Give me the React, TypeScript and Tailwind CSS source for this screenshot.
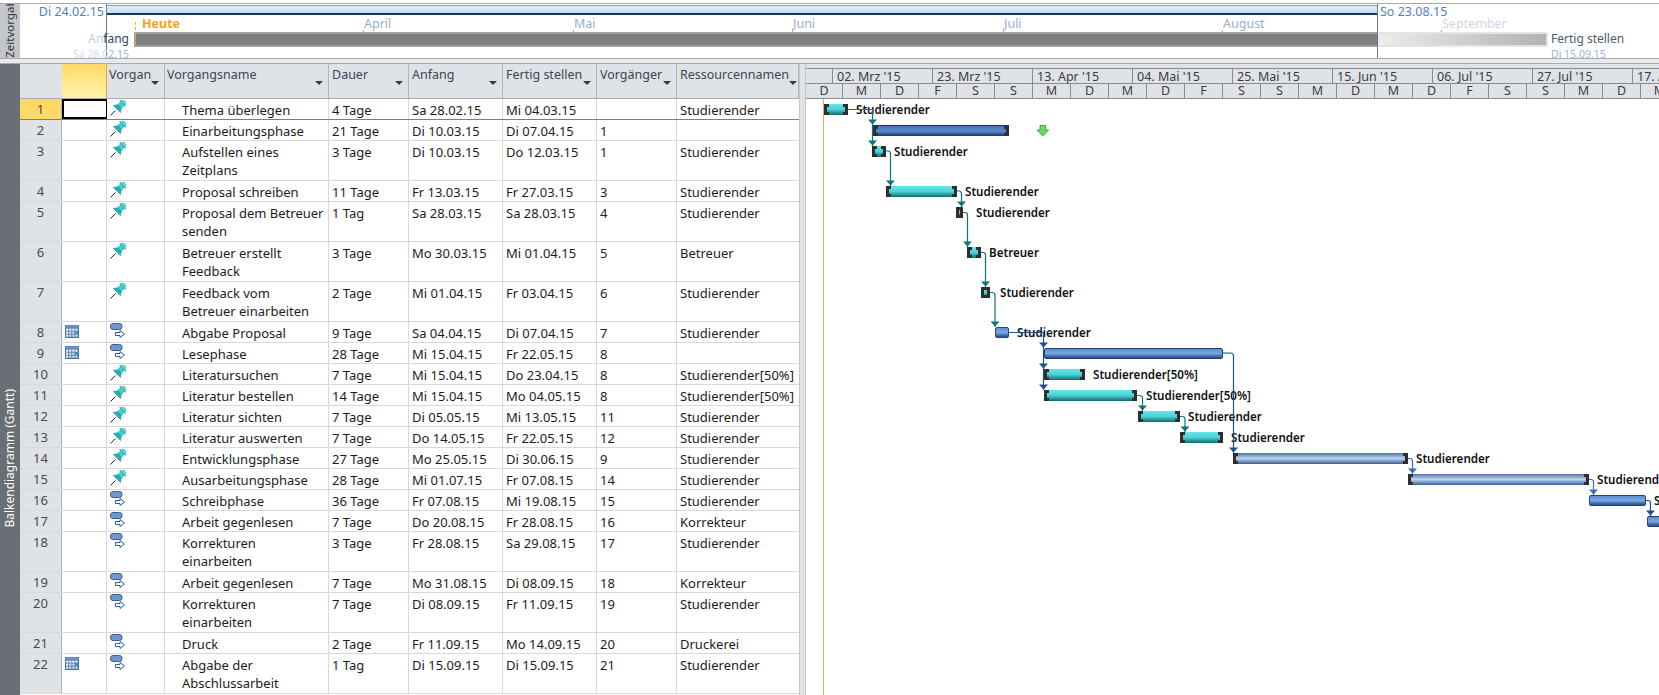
import React from "react";

type Row = {
  id: number;
  h: string;
  cal?: boolean;
  mode: "pin" | "auto";
  name: string;
  dur: string;
  start: string;
  end: string;
  pred: string;
  res: string;
};

const rows: Row[] = [
  { id: 1, h: "h-[21px]", mode: "pin", name: "Thema überlegen", dur: "4 Tage", start: "Sa 28.02.15", end: "Mi 04.03.15", pred: "", res: "Studierender" },
  { id: 2, h: "h-[21px]", mode: "pin", name: "Einarbeitungsphase", dur: "21 Tage", start: "Di 10.03.15", end: "Di 07.04.15", pred: "1", res: "" },
  { id: 3, h: "h-[40px]", mode: "pin", name: "Aufstellen eines\nZeitplans", dur: "3 Tage", start: "Di 10.03.15", end: "Do 12.03.15", pred: "1", res: "Studierender" },
  { id: 4, h: "h-[21px]", mode: "pin", name: "Proposal schreiben", dur: "11 Tage", start: "Fr 13.03.15", end: "Fr 27.03.15", pred: "3", res: "Studierender" },
  { id: 5, h: "h-[40px]", mode: "pin", name: "Proposal dem Betreuer\nsenden", dur: "1 Tag", start: "Sa 28.03.15", end: "Sa 28.03.15", pred: "4", res: "Studierender" },
  { id: 6, h: "h-[40px]", mode: "pin", name: "Betreuer erstellt\nFeedback", dur: "3 Tage", start: "Mo 30.03.15", end: "Mi 01.04.15", pred: "5", res: "Betreuer" },
  { id: 7, h: "h-[40px]", mode: "pin", name: "Feedback vom\nBetreuer einarbeiten", dur: "2 Tage", start: "Mi 01.04.15", end: "Fr 03.04.15", pred: "6", res: "Studierender" },
  { id: 8, h: "h-[21px]", cal: true, mode: "auto", name: "Abgabe Proposal", dur: "9 Tage", start: "Sa 04.04.15", end: "Di 07.04.15", pred: "7", res: "Studierender" },
  { id: 9, h: "h-[21px]", cal: true, mode: "auto", name: "Lesephase", dur: "28 Tage", start: "Mi 15.04.15", end: "Fr 22.05.15", pred: "8", res: "" },
  { id: 10, h: "h-[21px]", mode: "pin", name: "Literatursuchen", dur: "7 Tage", start: "Mi 15.04.15", end: "Do 23.04.15", pred: "8", res: "Studierender[50%]" },
  { id: 11, h: "h-[21px]", mode: "pin", name: "Literatur bestellen", dur: "14 Tage", start: "Mi 15.04.15", end: "Mo 04.05.15", pred: "8", res: "Studierender[50%]" },
  { id: 12, h: "h-[21px]", mode: "pin", name: "Literatur sichten", dur: "7 Tage", start: "Di 05.05.15", end: "Mi 13.05.15", pred: "11", res: "Studierender" },
  { id: 13, h: "h-[21px]", mode: "pin", name: "Literatur auswerten", dur: "7 Tage", start: "Do 14.05.15", end: "Fr 22.05.15", pred: "12", res: "Studierender" },
  { id: 14, h: "h-[21px]", mode: "pin", name: "Entwicklungsphase", dur: "27 Tage", start: "Mo 25.05.15", end: "Di 30.06.15", pred: "9", res: "Studierender" },
  { id: 15, h: "h-[21px]", mode: "pin", name: "Ausarbeitungsphase", dur: "28 Tage", start: "Mi 01.07.15", end: "Fr 07.08.15", pred: "14", res: "Studierender" },
  { id: 16, h: "h-[21px]", mode: "auto", name: "Schreibphase", dur: "36 Tage", start: "Fr 07.08.15", end: "Mi 19.08.15", pred: "15", res: "Studierender" },
  { id: 17, h: "h-[21px]", mode: "auto", name: "Arbeit gegenlesen", dur: "7 Tage", start: "Do 20.08.15", end: "Fr 28.08.15", pred: "16", res: "Korrekteur" },
  { id: 18, h: "h-[40px]", mode: "auto", name: "Korrekturen\neinarbeiten", dur: "3 Tage", start: "Fr 28.08.15", end: "Sa 29.08.15", pred: "17", res: "Studierender" },
  { id: 19, h: "h-[21px]", mode: "auto", name: "Arbeit gegenlesen", dur: "7 Tage", start: "Mo 31.08.15", end: "Di 08.09.15", pred: "18", res: "Korrekteur" },
  { id: 20, h: "h-[40px]", mode: "auto", name: "Korrekturen\neinarbeiten", dur: "7 Tage", start: "Di 08.09.15", end: "Fr 11.09.15", pred: "19", res: "Studierender" },
  { id: 21, h: "h-[21px]", mode: "auto", name: "Druck", dur: "2 Tage", start: "Fr 11.09.15", end: "Mo 14.09.15", pred: "20", res: "Druckerei" },
  { id: 22, h: "h-[40px]", cal: true, mode: "auto", name: "Abgabe der\nAbschlussarbeit", dur: "1 Tag", start: "Di 15.09.15", end: "Di 15.09.15", pred: "21", res: "Studierender" },
];

const columns = [
  { label: "Vorgan", pad: "pl-[2px]" },
  { label: "Vorgangsname", pad: "pl-[2px]" },
  { label: "Dauer", pad: "pl-[3px]" },
  { label: "Anfang", pad: "pl-[3px]" },
  { label: "Fertig stellen", pad: "pl-[3px]" },
  { label: "Vorgänger", pad: "pl-[3px]" },
  { label: "Ressourcennamen", pad: "pl-[3px]" },
];

// bars in page coordinates, the chart body starts at 806/99
const bars = [
  { x: 824, w: 24, y: 104, kind: "manual", label: "Studierender", lx: 856 },
  { x: 873, w: 136, y: 125, kind: "summary", label: "", lx: 0 },
  { x: 872, w: 14, y: 146, kind: "manual", label: "Studierender", lx: 894 },
  { x: 886, w: 71, y: 186, kind: "manual", label: "Studierender", lx: 965 },
  { x: 956, w: 7, y: 207, kind: "manual", label: "Studierender", lx: 976 },
  { x: 967, w: 14, y: 247, kind: "manual", label: "Betreuer", lx: 989 },
  { x: 981, w: 9, y: 287, kind: "manual", label: "Studierender", lx: 1000 },
  { x: 995, w: 14, y: 327, kind: "auto", label: "Studierender", lx: 1017 },
  { x: 1044, w: 179, y: 348, kind: "auto", label: "", lx: 0 },
  { x: 1044, w: 41, y: 369, kind: "manual", label: "Studierender[50%]", lx: 1093 },
  { x: 1044, w: 93, y: 390, kind: "manual", label: "Studierender[50%]", lx: 1146 },
  { x: 1138, w: 42, y: 411, kind: "manual", label: "Studierender", lx: 1188 },
  { x: 1180, w: 43, y: 432, kind: "manual", label: "Studierender", lx: 1231 },
  { x: 1233, w: 175, y: 453, kind: "pale", label: "Studierender", lx: 1416 },
  { x: 1408, w: 181, y: 474, kind: "pale", label: "Studierender", lx: 1597 },
  { x: 1589, w: 57, y: 495, kind: "auto", label: "Studierender", lx: 1654 },
  { x: 1647, w: 40, y: 516, kind: "auto", label: "", lx: 0 },
];

const barStyles: Record<string, string> = {
  manual: "bg-gradient-to-b from-[#5fe8ec] via-[#4fd0d6] to-[#0f6b70]",
  summary: "bg-gradient-to-b from-[#4a74b4] via-[#5b8ad0] to-[#1c3a66] border-t border-[#17365f]",
  auto: "bg-gradient-to-b from-[#5f8fd4] via-[#7aa5e2] to-[#244e8a] border border-[#1f4478] rounded-[2px]",
  pale: "bg-gradient-to-b from-[#4a77b5] via-[#c3d2e8] to-[#345f9c]",
};

const weeks = ["", "02. Mrz '15", "23. Mrz '15", "13. Apr '15", "04. Mai '15", "25. Mai '15", "15. Jun '15", "06. Jul '15", "27. Jul '15", "17. Aug '15"];
const dayNames = ["D", "M", "D", "F", "S", "S", "M"];
const days = Array.from({ length: 23 }, (_, i) => dayNames[i % 7]);

const months = [
  { name: "April", x: 343, color: "text-[#9aaecb]" },
  { name: "Mai", x: 553, color: "text-[#9aaecb]" },
  { name: "Juni", x: 772, color: "text-[#9aaecb]" },
  { name: "Juli", x: 983, color: "text-[#9aaecb]" },
  { name: "August", x: 1202, color: "text-[#9aaecb]" },
  { name: "September", x: 1421, color: "text-[#cfd8e6]" },
];

const teal = "#0c757b";
const navy = "#1f4e8c";
const steel = "#3f6fae";

const links = [
  { d: "M848 109.5H872.5V146", c: teal, tips: [[872.5, 124.5], [872.5, 145.5]] },
  { d: "M886 151H888Q890.5 151 890.5 154V186", c: teal, tips: [[890.5, 185.5]] },
  { d: "M957 191H959Q961.5 191 961.5 194V207", c: teal, tips: [[961.5, 206.5]] },
  { d: "M963 212.5H965Q967.5 212.5 967.5 215V247", c: teal, tips: [[967.5, 246.5]] },
  { d: "M981 252.5H983Q985.5 252.5 985.5 255V287", c: teal, tips: [[985.5, 286.5]] },
  { d: "M990 292.5H992Q995 292.5 995 295V327", c: teal, tips: [[995, 326.5]] },
  { d: "M1009 332.5H1043.5V390", c: navy, tips: [[1043.5, 347.5], [1043.5, 368.5], [1043.5, 389.5]] },
  { d: "M1223 353H1230Q1233.5 353 1233.5 356V453", c: navy, tips: [[1233.5, 452.5]] },
  { d: "M1137 395.5H1139Q1142.5 395.5 1142.5 398V411", c: teal, tips: [[1142.5, 410.5]] },
  { d: "M1180 416.5H1182Q1185 416.5 1185 419V432", c: teal, tips: [[1185, 431.5]] },
  { d: "M1408 458.5H1410Q1412.5 458.5 1412.5 461V474", c: steel, tips: [[1412.5, 473.5]] },
  { d: "M1589 479.5H1591Q1593.5 479.5 1593.5 482V495", c: steel, tips: [[1593.5, 494.5]] },
  { d: "M1646 500.5H1648Q1650.5 500.5 1650.5 503V516", c: navy, tips: [[1650.5, 515.5]] },
];

const PinIcon = () => (
  <svg width="16" height="16" viewBox="0 0 16 16">
    <line x1="0.5" y1="15.5" x2="5.5" y2="10.5" stroke="#2b2b2b" strokeWidth="1" />
    <g transform="rotate(45 8 8)" stroke="#1b8f93" strokeWidth="0.6">
      <rect x="3.5" y="-1.5" width="9" height="3" rx="1" fill="#56dcd8" />
      <rect x="5.5" y="1.5" width="5" height="5" fill="#3fd0cf" />
      <path d="M5.5 6H10.5L13 9.5H3Z" fill="#22b2b4" />
    </g>
  </svg>
);

const AutoIcon = () => (
  <svg width="16" height="16" viewBox="0 0 16 16">
    <rect x="0.5" y="0.5" width="11.5" height="6" rx="2.5" fill="#6f97d2" stroke="#36608f" />
    <path d="M5.5 9.5H10V7.5L14.5 11L10 14.5V12.5H5.5Z" fill="#fff" stroke="#2c5cb0" />
  </svg>
);

const CalendarIcon = () => (
  <svg width="14" height="13" viewBox="0 0 14 13">
    <rect x="0" y="0" width="14" height="13" fill="#4d6f9c" />
    <rect x="0.5" y="0.5" width="13" height="2" fill="#6f9ae0" />
    {[0, 1, 2].map((r) =>
      [0, 1, 2, 3].map((c) => (
        <rect
          key={`${r}-${c}`}
          x={1 + c * 3.1}
          y={3.5 + r * 3}
          width="2.4"
          height="2.3"
          fill={r === 1 && c === 3 ? "#14b4f0" : c === 0 || r === 0 ? "#e6ebf2" : "#cfd6e0"}
        />
      ))
    )}
  </svg>
);

const Timeline = () => (
  <div className="flex h-[55px] mt-[3px] border-t border-[#a9abae] bg-white shrink-0">
    <div className="w-[20px] shrink-0 bg-[#c3c6cb] overflow-hidden flex flex-col justify-end items-center">
      <span className="shrink-0 rotate-180 [writing-mode:vertical-rl] text-[11.5px] leading-[14px] text-[#30343a]">Zeitvorgabe</span>
    </div>
    <div className="relative flex-1 text-[12.5px] leading-[16px] overflow-hidden">
      <div className="absolute left-[86px] top-[1px] w-[1271px] h-[10px] bg-gradient-to-b from-[#e4ecf7] to-[#c8d9f0] border-t border-b-2 border-t-[#8aa0b8] border-b-[#15375c]" />
      <div className="absolute left-[86px] top-0 bottom-0 w-px bg-[#5f7f99]" />
      <div className="absolute left-0 top-[0px] w-[84px] text-right text-[#4f7fbd]">Di 24.02.15</div>
      <div className="absolute left-[1360px] top-[0px] text-[#4f7fbd]">So 23.08.15</div>

      <div className="absolute left-[115px] top-[18px] w-px h-[23px] border-l border-dashed border-[#f5a623] z-10" />
      <div className="absolute left-[122px] top-[12px] font-bold text-[#f5a21e]">Heute</div>
      {months.map((m) => (
        <div key={m.name} className={`absolute top-[12px] ${m.color}`} style={{ left: m.x + 1 }}>
          {m.name}
          <div className="absolute left-[-1px] top-[14px] w-px h-[5px] bg-[#9aaecb]" />
        </div>
      ))}

      <div className="absolute left-[114px] top-[28px] w-[1243px] h-[15px] bg-[#7f7f7f] border-2 border-[#a0a0a0] border-r-0" />
      <div className="absolute left-[1357px] top-[28px] w-[171px] h-[15px] bg-gradient-to-r from-[#ececec] to-[#b2b2b2] border-2 border-[#e4e4e4]" />
      <div className="absolute left-[1357px] top-0 bottom-0 w-px bg-[#5f7f99]" />

      <div className="absolute left-0 top-[27px] w-[109px] text-right text-[12px]">
        <span className="text-[#c6cbd2]">An</span>
        <span className="text-[#34475c]">fang</span>
      </div>
      <div className="absolute left-[1531px] top-[27px] text-[12px] text-[#4c5b6c]">Fertig stellen</div>
      <div className="absolute left-0 top-[42px] w-[109px] text-right text-[10.5px]">
        <span className="text-[#d3dce9]">Sa 28.0</span>
        <span className="text-[#9db4d6]">2.15</span>
      </div>
      <div className="absolute left-[1531px] top-[42px] text-[10.5px] text-[#9db4d6]">Di 15.09.15</div>
    </div>
  </div>
);

const Sheet = () => (
  <div className="w-[779px] shrink-0 flex flex-col">
    <div className="grid grid-cols-[42px_45px_58px_164px_80px_94px_94px_80px_122px] h-[35px] bg-[#dfe2e7] border-b border-[#a9adb2] text-[12.5px] text-[#3a4653]">
      <div className="border-r border-[#dfe2e7]" />
      <div className="bg-gradient-to-b from-[#ffd964] to-[#fff4ac] border-r border-[#e2a93a]" />
      {columns.map((c) => (
        <div key={c.label} className={`flex justify-between items-start border-r border-[#b3b6bb] overflow-hidden ${c.pad}`}>
          <span className="leading-[18px] pt-[2px] whitespace-nowrap">{c.label}</span>
          <span className="mt-[17px] mr-[5px] shrink-0 border-x-[4px] border-t-[4px] border-x-transparent border-t-[#3a3a3a]" />
        </div>
      ))}
    </div>
    {rows.map((r) => (
      <div
        key={r.id}
        className={`grid grid-cols-[42px_45px_58px_164px_80px_94px_94px_80px_122px] ${r.h} text-[13px] leading-[18px] text-[#1c1c1c] border-b ${r.id === 1 ? "border-[#7d7d7d]" : "border-[#d9d9d9]"}`}
      >
        <div className={`text-center text-[#4a4a4a] pt-px border-r border-[#adb0b5] ${r.id === 1 ? "bg-[#ffd966]" : "bg-[#dfe2e7]"}`}>{r.id}</div>
        <div className={`flex items-start pl-[3px] pt-[3px] border-r border-[#d9d9d9] ${r.id === 1 ? "border-2 border-black" : ""}`}>
          {r.cal && <CalendarIcon />}
        </div>
        <div className="pl-[3px] pt-[1px] border-r border-[#d9d9d9]">{r.mode === "pin" ? <PinIcon /> : <AutoIcon />}</div>
        <div className="pl-[17px] pt-[2px] whitespace-pre-line border-r border-[#d9d9d9]">{r.name}</div>
        <div className="pl-[3px] pt-[2px] border-r border-[#d9d9d9]">{r.dur}</div>
        <div className="pl-[3px] pt-[2px] border-r border-[#d9d9d9]">{r.start}</div>
        <div className="pl-[3px] pt-[2px] border-r border-[#d9d9d9]">{r.end}</div>
        <div className="pl-[3px] pt-[2px] border-r border-[#d9d9d9]">{r.pred}</div>
        <div className="pl-[3px] pt-[2px] whitespace-nowrap overflow-hidden">{r.res}</div>
      </div>
    ))}
  </div>
);

const GanttBar = ({ x, w, y, kind }: { x: number; w: number; y: number; kind: string }) => (
  <div
    className={`absolute h-[11px] flex justify-between ${barStyles[kind]}`}
    style={{ left: x - 806, top: y - 99, width: w }}
  >
    {kind !== "auto" && (
      <>
        <span className="w-[5px] h-full border-y-[3px] border-l-[3px] border-[#2e2e2e]" />
        <span className="w-[5px] h-full border-y-[3px] border-r-[3px] border-[#2e2e2e]" />
      </>
    )}
  </div>
);

const Chart = () => (
  <div className="flex-1 flex flex-col min-w-0 overflow-hidden">
    <div className="h-[35px] shrink-0 flex flex-col bg-[#dfe2e7] border-b border-[#8b8b8b] text-[12.5px] text-[#3c3c3c]">
      <div className="h-[5px] border-b border-[#8b8b8b]" />
      <div className="flex h-[15px] border-b border-[#8b8b8b]">
        {weeks.map((w, i) => (
          <div
            key={i}
            className={`${i === 0 ? "w-[27px]" : "w-[100px]"} shrink-0 border-r border-[#8b8b8b] pl-[4px] leading-[15px] whitespace-nowrap`}
          >
            {w}
          </div>
        ))}
      </div>
      <div className="flex flex-1">
        {days.map((d, i) => (
          <div
            key={i}
            className={`${i === 0 ? "w-[37px]" : "w-[38px]"} shrink-0 border-r border-[#8b8b8b] text-center leading-[14px]`}
          >
            {d}
          </div>
        ))}
      </div>
    </div>
    <div className="relative flex-1">
      {bars.map((b, i) => (
        <GanttBar key={i} x={b.x} w={b.w} y={b.y} kind={b.kind} />
      ))}
      {bars
        .filter((b) => b.label)
        .map((b, i) => (
          <div
            key={i}
            className="absolute h-[11px] flex items-center whitespace-nowrap text-[11.6px] font-semibold text-[#111]"
            style={{ left: b.lx - 806, top: b.y - 99 }}
          >
            {b.label}
          </div>
        ))}
      <svg className="absolute inset-0 pointer-events-none" width="853" height="596" viewBox="806 99 853 596">
        <line x1="823.5" y1="99" x2="823.5" y2="695" stroke="#f0a468" strokeWidth="1" />
        {links.map((l, i) => (
          <g key={i}>
            <path d={l.d} fill="none" stroke={l.c} strokeWidth="1.2" />
            {l.tips.map((t, k) => (
              <polygon key={k} points={`${t[0] - 4.5},${t[1] - 5} ${t[0] + 4.5},${t[1] - 5} ${t[0]},${t[1]}`} fill={l.c} />
            ))}
          </g>
        ))}
        <path d="M1040 125.5H1045.5V130H1048.5L1042.7 136L1037 130H1040Z" fill="#62e05c" stroke="#2f9a2b" strokeWidth="0.8" />
      </svg>
    </div>
  </div>
);

export default function App() {
  return (
    <div className="w-[1659px] h-[695px] overflow-hidden bg-white flex flex-col font-['Noto_Sans',sans-serif]">
      <Timeline />
      <div className="h-[6px] shrink-0 bg-[#e9eaec] border-y border-[#a9abae]" />
      <div className="flex-1 flex min-h-0">
        <div className="w-[20px] shrink-0 bg-[#6a6e75] flex flex-col justify-end items-center pb-[167px]">
          <span className="shrink-0 rotate-180 [writing-mode:vertical-rl] text-[12px] leading-[14px] text-white whitespace-nowrap">Balkendiagramm (Gantt)</span>
        </div>
        <Sheet />
        <div className="w-[7px] shrink-0 bg-[#dfe2e7] border-x border-[#c4c6ca]" />
        <Chart />
      </div>
    </div>
  );
}
